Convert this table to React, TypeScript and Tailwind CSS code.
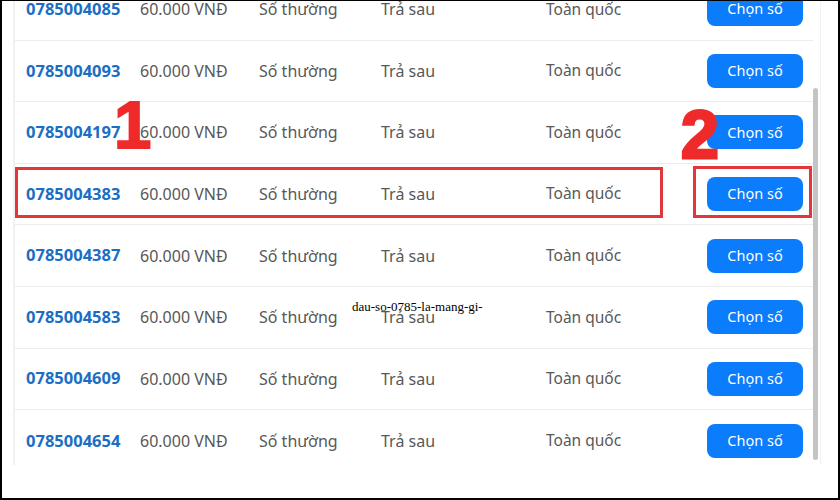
import React from "react";

const rows = [
  "0785004085",
  "0785004093",
  "0785004197",
  "0785004383",
  "0785004387",
  "0785004583",
  "0785004609",
  "0785004654",
];

export default function App() {
  return (
    <div className="w-[840px] h-[500px] bg-black pl-[2px] pr-[2px] pt-[1px] pb-[2px] flex">
      <div
        className="relative flex-1 bg-white overflow-hidden flex flex-col"
        style={{ fontFamily: '"Noto Sans", "Open Sans", sans-serif' }}
      >
        <div className="flex h-[464px] pl-[11px]">
          <div className="relative w-[800px] h-full overflow-hidden border-l-2 border-[#f1f1f1]">
            <div className="mt-[-22px]">
              {rows.map((n, i) => (
                <div
                  key={n}
                  className={`flex items-center h-[61.6px] ${i < rows.length - 1 ? "border-b border-[#ececec]" : ""}`}
                >
                  <div className="w-[125px] pl-[11px] text-[16.5px] font-bold text-[#1b6ec4]">{n}</div>
                  <div className="w-[119px] text-[16px] text-[#585858]">60.000 VNĐ</div>
                  <div className="w-[122px] text-[16px] text-[#585858]">Số thường</div>
                  <div className="w-[165px] text-[16px] text-[#585858]">Trả sau</div>
                  <div className="w-[161px] text-[15.5px] text-[#585858]">Toàn quốc</div>
                  <button className="w-[96px] h-[34px] rounded-[8px] bg-[#0b7cfb] text-white text-[14.5px]">
                    Chọn số
                  </button>
                </div>
              ))}
            </div>
          </div>
          <div className="w-[5px] pt-[87px] pb-[5px] flex flex-col">
            <div className="flex-1 rounded-full bg-[#c4c4c4]" />
          </div>
          <div className="w-[1px] ml-[2px] bg-[#f2f2f2]" />
        </div>

        {/* annotations */}
        <div className="absolute left-[13px] top-[166px] w-[648px] h-[51px] border-[3px] border-[#e2363a]" />
        <div className="absolute left-[691px] top-[165px] w-[119px] h-[52px] border-[3px] border-[#e2363a]" />
        <div
          className="absolute left-[112px] top-[90px] text-[67px] leading-none font-black text-[#ef2a2a] [-webkit-text-stroke:2px_#ef2a2a]"
          style={{ fontFamily: '"Liberation Sans", Arial, sans-serif' }}
        >
          1
        </div>
        <div
          className="absolute left-[679px] top-[99px] text-[68px] leading-none font-black text-[#ef2a2a] [-webkit-text-stroke:3px_#ef2a2a]"
          style={{ fontFamily: '"Liberation Sans", Arial, sans-serif' }}
        >
          2
        </div>
        <div
          className="absolute left-[350px] top-[296px] text-[13px] text-black"
          style={{ fontFamily: '"Liberation Serif", "DejaVu Serif", serif' }}
        >
          dau-so-0785-la-mang-gi-
        </div>
      </div>
    </div>
  );
}
